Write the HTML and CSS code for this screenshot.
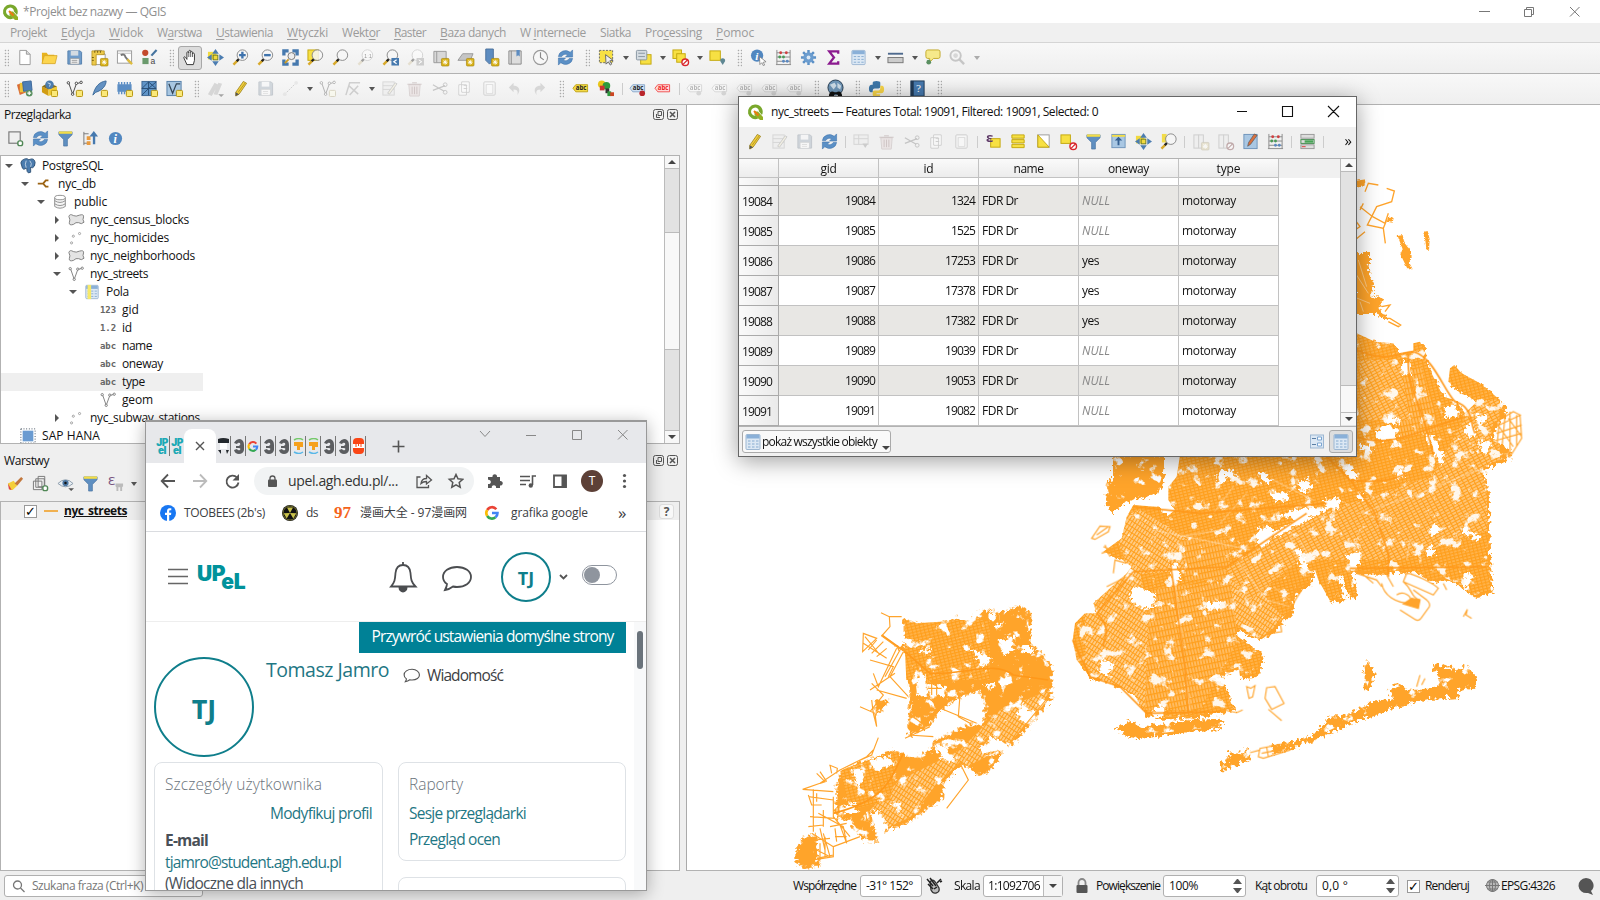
FILE: index.html
```html
<!DOCTYPE html>
<html lang="pl">
<head>
<meta charset="utf-8">
<title>*Projekt bez nazwy — QGIS</title>
<link rel="stylesheet" href="styles.css">
</head>
<body>
<div class="app">
  <header class="titlebar">
    <span class="ic" data-icon="qgis"></span><span class="apptitle" data-w="143">*Projekt bez nazwy — QGIS</span>
    <svg class="winctl" width="110" height="20" viewBox="0 0 110 20"><g fill="none" stroke="#777"><path d="M4 9.500H15M49.500 7.500h7v7h-7zM51.500 7.500v-2h7v7h-2M95 5l9.500 9.500M104.500 5L95 14.500"/></g></svg>
  </header>
  <nav class="menubar">
    <span data-w="37">Pro<u>j</u>ekt</span><span data-w="34"><u>E</u>dycja</span><span data-w="34"><u>W</u>idok</span><span data-w="45">W<u>a</u>rstwa</span><span data-w="57"><u>U</u>stawienia</span><span data-w="41"><u>W</u>tyczki</span><span data-w="38">Wekt<u>o</u>r</span><span data-w="32"><u>R</u>aster</span><span data-w="66"><u>B</u>aza danych</span><span data-w="66">W <u>i</u>nternecie</span><span data-w="31">Siatka</span><span data-w="57">Pro<u>c</u>essing</span><span data-w="38"><u>P</u>omoc</span>
  </nav>
  <div class="toolbar" data-icons="H new open save layout manage style H hand! pan zin zout zfull zsel zlay z11- zlast znext- newmap new3d bookm book clock refresh H select V layers V desel V selloc H info abacus gear sigma table V measure V tip zq- v"></div>
  <div class="toolbar second" data-icons="H vlay geo newv feather chip mesh vbox H pens- pencil save- dots- V newv- node- V editf- trash- cut- copy- paste- undo- redo- H abc balloons S abcpin abcred S abcg- abcg- abcg- abcg- abcg- H globe H python H help H"></div>

  <div class="work">
    <aside class="left">
      <div class="ptitle"><span data-w="67">Przeglądarka</span><svg class="pbtn" width="26" height="12" viewBox="0 0 26 12"><g fill="none" stroke="#555"><rect x=".5" y=".5" width="10" height="10" rx="2"/><path d="M3.500 5v3.500h3.500M5 2.500h3.500V6.500H5z"/><rect x="14.500" y=".5" width="10" height="10" rx="2"/><path d="M17 3l5 5M22 3l-5 5" stroke-width="1.500"/></g></svg></div>
      <div class="ptools" data-icons="addl refresh filter collapse infob"></div>
      <div class="treebox"><div class="tree" id="tree"></div><div class="sbar"><i class="up"></i><b class="thumb1"></b><i class="dn"></i></div></div>
      <div class="ptitle lay"><span data-w="45">Warstwy</span><svg class="pbtn" width="26" height="12" viewBox="0 0 26 12"><g fill="none" stroke="#555"><rect x=".5" y=".5" width="10" height="10" rx="2"/><path d="M3.500 5v3.500h3.500M5 2.500h3.500V6.500H5z"/><rect x="14.500" y=".5" width="10" height="10" rx="2"/><path d="M17 3l5 5M22 3l-5 5" stroke-width="1.500"/></g></svg></div>
      <div class="ptools lt" data-icons="brush group eye filter eps V"></div>
      <div class="layers"><div class="lrow"><span class="chk">✓</span><i class="sym"></i><b data-w="63">nyc_streets</b><span class="q">?</span></div></div>
    </aside>
    <main class="map">
      <svg width="914" height="766" viewBox="686 105 914 766">
        <defs>
          <pattern id="p0" width="4" height="3" patternUnits="userSpaceOnUse" patternTransform="rotate(-14)"><rect width="4" height="3" fill="#ffb44e"/><path d="M0 .5H4M.5 0V3" stroke="#ff9f1c" stroke-width="1.300"/></pattern>
          <pattern id="pa" width="3" height="5" patternUnits="userSpaceOnUse" patternTransform="rotate(33)"><rect width="3" height="5" fill="#ffcd88"/><path d="M0 .5H3M.5 0V5" stroke="#ff9f1c" stroke-width="1.200"/></pattern>
          <pattern id="pb" width="3" height="6" patternUnits="userSpaceOnUse" patternTransform="rotate(-12)"><rect width="3" height="6" fill="#ffbd64"/><path d="M0 .5H3M.5 0V6" stroke="#ff9f1c" stroke-width="1.300"/></pattern>
          <pattern id="pc" width="5" height="3" patternUnits="userSpaceOnUse" patternTransform="rotate(-28)"><rect width="5" height="3" fill="#ffc474"/><path d="M0 .5H5M.5 0V3" stroke="#ff9f1c" stroke-width="1.200"/></pattern>
          <filter id="rough" x="-5%" y="-5%" width="110%" height="110%"><feTurbulence type="turbulence" baseFrequency=".16" numOctaves="2" seed="4"/><feDisplacementMap in="SourceGraphic" scale="9" xChannelSelector="R" yChannelSelector="G"/></filter>
          <filter id="specks" x="0" y="0" width="100%" height="100%"><feTurbulence type="fractalNoise" baseFrequency=".08" numOctaves="5" seed="11"/><feColorMatrix values="0 0 0 0 1  0 0 0 0 1  0 0 0 0 1  9 0 0 0 -5.500" result="n"/><feComposite in="n" in2="SourceAlpha" operator="in"/></filter>
          <path id="queens" d="M360 465L700 200 890 100 945 125 1000 130 1015 160 1060 152 1060 130 1080 125 1097 160 1088 170 1110 210 1150 290 1185 300 1215 340 1250 305 1190 265 1165 245 1170 205 1183 195 1205 220 1260 250 1332 310 1325 325 1340 340 1300 370 1290 420 1345 440 1345 470 1270 500 1268 530 1280 565 1285 800 1292 870 1245 885 1205 865 1190 850 1150 832 1115 840 1060 810 960 815 870 812 888 885 810 902 775 840 762 800 745 850 700 880 690 930 640 985 598 1018 530 985 528 1005 605 1065 595 1100 590 1125 540 1128 535 1100 480 1120 500 1180 520 1225 470 1235 380 1250 290 1250 260 1245 220 1180 130 1140 90 1130 50 1080 38 1020 45 970 75 940 110 940 100 910 200 820 215 800 175 770 130 755 185 715 200 650 220 615 290 620 320 650 345 630 325 600 325 560 350 530Z"/>
          <path id="shore" d="M150 460H312V500L300 550 285 578 210 592 175 610 150 632 128 605 135 540 150 535ZM160 1275L200 1258 240 1275 350 1255 480 1250 478 1280 380 1290 230 1308 190 1300ZM740 1310L800 1245 855 1240 940 1195 990 1190 980 1160 1010 1150 1035 1160 1100 1160 1130 1145 1115 1085 1150 1095 1190 1105 1215 1085 1245 1135 1245 1155 1185 1165 1190 1185 1090 1192 980 1222 870 1262 745 1320ZM625 1330L690 1320 735 1295 745 1310 690 1340 630 1355ZM470 1405L475 1385 500 1375 500 1355 540 1350 555 1335 567 1370 530 1385 490 1405ZM905 1160V1110L915 1070 938 1110 920 1165Z"/>
          <path id="staten" d="M365 108L410 130 480 125 520 108 560 122 610 85 670 90 705 68 745 90 745 185 800 235 810 260 810 350 690 490 630 465 590 500 610 520 660 510 640 550 595 580 540 545 485 600 480 650 385 715 305 750 290 700 262 690 285 780 240 775 200 715 160 710 160 630 170 580 230 545 320 505 390 525 440 510 455 475 560 430 600 430 608 380 590 325 540 340 490 370 460 420 385 465 375 440 385 360 380 350 378 280 375 215 335 195 365 190Z"/>
        </defs>
        <g filter="url(#rough)">
          <g transform="translate(1060 300) scale(.33333)" fill="#ffa42c"><use href="#queens"/><use href="#shore"/></g>
          <g transform="translate(780 580) scale(.33333)" fill="#ffa42c"><use href="#staten"/><path d="M40 800L60 770 100 755 110 850 65 857 40 835ZM275 355L320 350 300 380 280 400Z"/></g>
          <path d="M1353 251L1367 251 1367 260 1366 267 1371 283 1370 297 1375 292 1380 296 1377 307 1385 318 1375 312 1353 312Z" fill="#ffa42c"/>
        </g>
        <g clip-path="url(#cq)">
          <clipPath id="cq"><use href="#queens" transform="translate(1060 300) scale(.33333)"/></clipPath>
          <path fill="url(#p0)" d="M1060 330H1500V720H1060Z"/>
          <path fill="url(#pa)" d="M1085 580L1140 570 1160 700 1140 712 1100 680 1085 665ZM1110 520L1140 510 1200 545 1190 570 1130 575ZM1225 570L1260 590 1285 620 1260 638 1236 625Z"/>
          <path fill="url(#pb)" d="M1150 590L1230 580 1238 640 1200 710 1145 710ZM1180 540H1230V580H1185ZM1380 385L1420 365 1440 430 1400 440Z"/>
          <path fill="url(#pc)" d="M1225 570L1300 520 1420 480 1488 460V530L1400 560 1300 560 1250 600ZM1360 360L1400 360 1410 420 1360 420ZM1475 400L1500 400 1500 460 1430 480Z"/>
        </g>
        <g clip-path="url(#cs)"><clipPath id="cs"><use href="#staten" transform="translate(780 580) scale(.33333)"/></clipPath><path fill="url(#pa)" d="M1000 710L1050 690 1020 740 940 780 900 830 860 820 900 780 960 750Z"/><path fill="url(#p0)" d="M905 620H990V680H905ZM840 770L900 750 890 800 850 810Z"/></g>
        <g fill="#fff" filter="url(#specks)">
          <g transform="translate(1060 300) scale(.33333)"><use href="#queens" opacity=".9"/><use href="#shore"/></g>
          <use href="#staten" transform="translate(780 580) scale(.33333)"/>
        </g>
        <g filter="url(#rough)"><g transform="translate(1060 300) scale(.33333)">
          <path fill="#fff" d="M200 880L220 852 275 870 280 910 250 922 210 905ZM120 1070L155 1090 135 1120 108 1110ZM435 903H471V920H435ZM590 680L620 668 640 690 600 735 578 705ZM650 640L700 620 760 620 830 600 835 612 760 635 720 660 640 705 635 690 700 650ZM780 595L830 588 835 605 795 615ZM625 570L670 568 685 592 640 600ZM710 540L735 530 755 555 720 575ZM847 490L865 488 885 520 875 540 855 520ZM855 755L893 745 890 795 870 802 855 770ZM935 390L975 370 1010 385 1005 420 950 415ZM975 347H1010V362H975ZM1020 175L1040 190 1045 220 1022 215ZM1195 690L1205 680 1257 700 1250 716ZM1095 685L1110 668 1137 680 1110 705ZM1085 745L1105 730 1125 755 1095 765ZM1205 380L1225 360 1245 385 1220 415ZM1255 415L1283 415 1280 455 1255 450ZM1095 400L1112 395 1150 470 1140 485 1120 460ZM1240 340L1273 335 1270 365 1240 365ZM1145 315L1175 310 1195 340 1150 345ZM465 515L510 500 525 520 470 545ZM590 510L612 510 630 540 605 545ZM700 740L714 738 740 800 722 805ZM320 790L342 780 357 830 330 845ZM890 425L930 430 925 450 895 440ZM275 1220L305 1205 308 1240 275 1245ZM450 1115L510 1140 505 1160 460 1130ZM1215 805L1232 820 1212 865 1200 855ZM1000 510L1020 498 1028 515 1005 528ZM885 570L905 575 914 595 895 592ZM832 822L842 820 860 895 848 897ZM970 825L1010 820 1010 900 975 870Z"/>
        </g>
        <path transform="translate(780 580) scale(.33333)" fill="#fff" d="M720 368L765 398 743 428 698 395ZM650 185L680 160 698 165 692 205 660 215ZM560 190L630 235 600 255ZM625 90H645V112H625ZM635 130L665 120 650 140ZM400 290L428 275 435 340 405 345ZM440 310L490 315 482 345 445 335ZM540 340L590 335 610 385 588 435 545 400ZM470 385L530 370 535 410 480 450 445 430ZM600 500L630 465 690 495 640 490 605 520ZM450 485L490 495 518 530 490 540ZM265 530L320 525 333 545 275 570ZM212 560H243V605L220 615ZM185 670L218 665 228 690 185 698ZM415 205L450 198 430 218ZM605 310L645 303 620 325ZM268 690L290 690 322 735 290 750ZM325 665L358 658 350 690ZM720 195H750V210H720Z"/></g>
        <g transform="translate(1060 300) scale(.33333)">
          <g fill="none" stroke="#fff" stroke-width="3" opacity=".45"><path d="M280 690L575 750M360 710L510 685M340 800L390 1230M530 780L620 900 690 920M640 540L760 600M520 560L460 640M560 580L480 670M640 860L690 900M900 640L1080 580 1250 510M690 710L740 830M720 720L760 790M1050 720L1040 780"/></g>
          <g fill="none" stroke="#ff981a" stroke-width="5"><path d="M890 150C980 190 1010 160 1060 155 1120 170 1150 270 1185 305 1240 320 1230 370 1245 400M1045 170C1040 260 1080 310 1100 390L1120 460M870 540C950 550 1000 540 1040 520M890 410C960 435 1010 420 1110 385L1210 350M760 430L870 540 940 630 985 760V830M870 805L1280 800M220 815L110 940C160 990 130 1010 130 1040M220 620L420 640 800 610M330 780L375 1100 385 1240M220 815L500 800 740 640M38 1020L90 1130 180 1160 260 1240 480 1235"/></g>
          <g fill="none" stroke="#ffa42c" stroke-width="3.500"><path d="M95 715L120 678 150 680 145 695 105 718ZM110 705L145 680M620 1163L645 1160 672 1210 635 1228 615 1195ZM625 1228L665 1262M560 1160L572 1165 585 1157 578 1190 567 1195ZM595 1370L600 1345 680 1330 690 1350 610 1375ZM605 1360L680 1345M620 1342L625 1370M570 1358L600 1350M965 850C970 880 1000 915 1070 910M1010 885C1030 870 1060 890 1050 905M1020 930L1065 958Q1075 965 1083 955L1108 920Q1112 910 1100 900L1060 870M1040 820C1060 820 1120 850 1135 865L1120 885 1030 845ZM1030 845C1060 870 1050 890 1080 900M1210 950L1222 928 1218 945 1235 955M470 1225L530 1238 548 1230M1300 370L1360 335 1380 345 1385 415 1350 470 1330 440M1320 340L1310 450M1335 350L1325 450M1295 385L1383 345M1310 400L1385 375M1295 425L1385 400M1350 335V470M1370 345V440M1345 355L1385 410M1310 370L1360 440M130 740L205 770M160 820L165 780 200 790M125 760L190 735M135 735L150 770M630 1000L660 965 665 995ZM1070 1160L1080 1125M1085 1155L1095 1135M890 820L950 840 965 860M980 825L1000 860M900 815L940 850M1160 870L1150 850M140 860L200 830M110 915L180 870M700 870L740 845 700 910M720 850L680 920"/><path d="M1030 912L1055 895 1080 900 1075 925Z" fill="#ffa42c"/></g>
        </g>
        <g transform="translate(780 580) scale(.33333)">
          <g fill="none" stroke="#ff981a" stroke-width="5"><path d="M375 215L450 280C560 285 640 240 700 285L805 300M370 520C330 600 320 660 160 700M375 215L305 165"/></g>
          <g fill="none" stroke="#ffa42c" stroke-width="3.500"><path d="M303 98L328 110 365 110M328 110L330 140 305 168 350 200 380 215M250 160L248 215 290 175ZM255 170L300 225M250 190L320 235M265 210L290 180M275 220L310 185M290 230L320 205M350 205L295 320 280 280M370 215L330 290 385 350M360 210L315 290M270 240L340 260 325 290M290 330L380 355M270 330L345 280M240 380L285 400 290 440 280 400 275 360M275 310L310 345 270 395M295 473L275 525 230 545M280 510L260 530 180 570 120 610 68 628 160 635M110 580L135 605 120 610M120 575L140 605M150 555L155 580M148 555L172 565 170 580M100 628V755M85 650L160 660M90 710L165 715M85 740L130 735M110 640V665M130 690V740M85 645L95 675 125 675M160 650V710L210 770M115 700L190 740 200 790M180 735L200 790M130 760L150 830 110 810M160 800V830L100 840M160 800L240 770M385 465L460 470M385 400L440 440M540 345L535 410 570 430M470 380L590 430M440 350L480 380 530 350M440 310H485M445 325H485M455 300V345M470 300V345M540 550L565 600 500 685M580 570L600 585 640 550M690 490L810 345M745 90L752 130M375 475L450 440M120 745L135 810M165 770H200M255 690L270 770M110 835L160 825M95 760L160 800M105 780L150 775M120 790V840M135 770V830M150 740L200 730M165 745L170 785"/></g>
        </g>
        <g transform="translate(1340 160) scale(.33333)">
          <g filter="url(#rough)" fill="#ffa42c"><path d="M170 225L185 222 190 245 210 270 212 290 205 305 215 325 200 325 178 280 185 265ZM250 212L260 210 266 235 264 270 256 265ZM40 60L75 55 70 75 50 80ZM140 170L158 170 155 185 138 182Z"/></g>
          <g fill="none" stroke="#ffa42c" stroke-width="4"><path d="M75 95L85 70 115 75M140 85L163 93 155 125 110 140 95 170 82 195 130 205 136 250M60 140L98 170 135 190 145 160M130 205L140 180M45 240L75 215M45 180L60 200 45 210M135 475L150 475 182 495 175 500 145 485M125 440L150 435 135 455M60 150L70 130"/></g>
          <path d="M40 330L85 400M55 300L80 380M40 410L90 430M60 425L70 455" stroke="#fff" stroke-width="2.500" fill="none" opacity=".5"/>
        </g>
      </svg>
    </main>
  </div>

  <footer class="status">
    <div class="find"><svg width="13" height="13" viewBox="0 0 13 13" fill="none" stroke="#777" stroke-width="1.300"><circle cx="5.500" cy="5" r="4"/><path d="M8.500 8l4 4"/></svg><span data-w="111">Szukana fraza (Ctrl+K)</span></div>
    <div class="stright">
      <span style="width:67px" data-w="63">Współrzędne</span><span class="box" style="width:62px"><em data-w="47">-31° 152°</em></span><span class="ic gap1" data-icon="mouse"></span><span style="width:29px" data-w="26">Skala</span><span class="box drop" style="width:80px"><em data-w="52">1:1092706</em><i class="dn"></i></span><span class="ic gap2" data-icon="lock"></span><span style="width:67px" data-w="64">Powiększenie</span><span class="box spin" style="width:83px"><em data-w="29">100%</em><s></s></span><span class="kat" data-w="52">Kąt obrotu</span><span class="box spin" style="width:83px"><em data-w="26">0,0 °</em><s></s></span><span class="chk sm">✓</span><span class="ren" data-w="44">Renderuj</span><span class="ic g3" data-icon="crs"></span><span data-w="54">EPSG:4326</span><svg class="msg" width="18" height="18" viewBox="0 0 18 18"><path d="M9 1a8 7.500 0 1 0 1 15h1l5 2-2-4a8 7.500 0 0 0-5-13z" fill="#555"/></svg>
    </div>
  </footer>
</div>

<section class="attr">
  <div class="atitle"><span class="ic" data-icon="qgis"></span><span data-w="327">nyc_streets — Features Total: 19091, Filtered: 19091, Selected: 0</span><svg width="104" height="14" viewBox="0 0 104 14"><path d="M1 6.500H11M46.500 1.500h10v10h-10zM92 1l11 11M103 1L92 12" fill="none" stroke="#111" stroke-width="1.100"/></svg></div>
  <div class="atools" data-icons="pencil editf- save- refresh S addrow- trash- cut- copy- paste- S epsel selall inv desel2 filter top pan zlay S newcol- delcol- editcol abacus S cond S"></div><span class="more">»</span>
  <div class="abody"><div class="grid" id="grid"></div><div class="sbar"><i class="up"></i><b class="thumb2"></b><i class="dn"></i></div></div>
  <div class="afoot"><span class="showall"><span class="ic" data-icon="table"></span><span data-w="115">pokaż wszystkie obiekty</span><i class="dn"></i></span><span class="fview"><span class="ic" data-icon="form"></span></span><span class="tview"><span class="ic" data-icon="table"></span></span></div>
</section>

<section class="chrome">
  <div class="tabs">
    <span class="fav up2">JP<br>el</span><span class="fav up2">JP<br>el</span><span class="tabon"><svg width="10" height="10" viewBox="0 0 10 10"><path d="M1 1l8 8M9 1L1 9" stroke="#555" stroke-width="1.400"/></svg></span>
    <span id="favs" class="favs"></span>
    <svg class="plus" width="13" height="13" viewBox="0 0 13 13"><path d="M6.500 .5v12M.5 6.500h12" stroke="#555" stroke-width="1.600"/></svg>
    <svg class="cctl" width="150" height="14" viewBox="0 0 150 14"><path d="M1 4l5 5.500L11 4M47 8.500H57M93.500 3.500h9v9h-9zM139 3l9.500 9.500M148.500 3L139 12.500" fill="none" stroke="#888"/></svg>
  </div>
  <div class="cbar">
    <svg width="90" height="18" viewBox="0 0 90 18"><g fill="none" stroke="#555" stroke-width="1.800"><path d="M15 9H2M8 2.500L1.700 9 8 15.500"/><path d="M33 9H46M40 2.500L46.300 9 40 15.500" stroke="#bbb"/><path d="M77 5.500A6 6 0 1 0 78.500 10.500"/></g><path d="M79 2v6.500h-6.500z" fill="#555"/></svg>
    <div class="omni"><svg width="10" height="13" viewBox="0 0 10 13"><rect y="4.500" width="9" height="7.500" rx="1" fill="#555"/><path d="M2 5V3.500a2.500 2.500 0 0 1 5 0V5" fill="none" stroke="#555" stroke-width="1.300"/></svg><span data-w="110">upel.agh.edu.pl/...</span>
      <svg class="share" width="48" height="16" viewBox="0 0 48 16" fill="none" stroke="#555" stroke-width="1.300"><path d="M4.500 4H1v10.500h11.500V12M5 10.500C5.500 6.500 8 5.500 10.500 5.500V2.500L15.500 7l-5 4V8.500C8 8.500 6.500 9 5 10.500z"/><path d="M40 1.500l2 4.300 4.700.5-3.500 3.200 1 4.700L40 11.800 35.800 14.200l1-4.700-3.500-3.200 4.700-.5z" stroke-width="1.500"/></svg></div>
    <svg class="ext" width="145" height="24" viewBox="0 0 145 24"><path d="M4 8h3.500a2.300 2.300 0 1 1 4.500 0h3v4a2.300 2.300 0 1 1 0 4.500V19h-4a2.200 2.200 0 1 0-4.200 0H3v-4a2.200 2.200 0 1 0 0-4.200V8z" fill="#555"/><path d="M35 7.500h10M35 11.500h10M35 15.500h6M47.500 16V7h3.500" fill="none" stroke="#555" stroke-width="1.600"/><circle cx="45.800" cy="16.500" r="2.200" fill="#555"/><path d="M69 6.500h12v11.500H69z" fill="none" stroke="#555" stroke-width="1.800"/><path d="M76.500 6h5v12.500h-5z" fill="#555"/><circle cx="107" cy="12" r="11" fill="#5d4037"/><g fill="#555"><circle cx="139.500" cy="6.500" r="1.600"/><circle cx="139.500" cy="12" r="1.600"/><circle cx="139.500" cy="17.500" r="1.600"/></g><text x="107" y="16" text-anchor="middle" fill="#fff" class="tav">T</text></svg>
  </div>
  <div class="marks">
    <svg class="m1" width="16" height="16" viewBox="0 0 16 16"><circle cx="8" cy="8" r="8" fill="#1877f2"/><path d="M7 16v-6H5V7.700h2V6.200C7 4.300 8 3.200 9.800 3.200h1.500v2H10.200c-.8 0-1 .4-1 1v1.500h2.100L11 10H9.200v6z" fill="#fff"/></svg><span class="mt1" data-w="81">TOOBEES (2b's)</span>
    <svg class="m2" width="16" height="16" viewBox="0 0 16 16"><circle cx="8" cy="8" r="8" fill="#111"/><path d="M8 8L5 2.500h6zM8 8l6.300.3-3 5.200zM8 8l-6.300.3 3 5.200z" fill="#c9c24a"/><circle cx="8" cy="8" r="7" fill="none" stroke="#8d8a3b" stroke-width=".8"/></svg><span class="mt2" data-w="12">ds</span>
    <b class="m3">97</b><span class="mt3" data-w="107">漫画大全 - 97漫画网</span>
    <span class="ic m4" data-icon="google"></span><span class="mt4" data-w="77">grafika google</span><span class="m5">»</span>
  </div>
  <div class="upel">
    <svg width="20" height="17" viewBox="0 0 20 17"><path d="M0 1.500H20M0 8.500H20M0 15.500H20" stroke="#666" stroke-width="1.400"/></svg>
    <span class="logo"><span>UP</span><span class="lo">eL</span></span>
    <svg class="bell" width="84" height="32" viewBox="0 0 84 32" fill="none" stroke="#4b4d50" stroke-width="1.800"><path d="M2 25.500C6 21 6 18 6.500 12 7 7 10 4 14 4s7 3 7.500 8c.5 6 .5 9 5 13.500z"/><path d="M14 1v3"/><path d="M10.500 27a3.500 3.500 0 0 0 7 0z" fill="#4b4d50"/><path d="M68 6c-8 0-14 4.200-14 10 0 3 1.500 5.300 4 7 0 2-1 4-2 6 3-.5 5.500-1.500 8-3.500 1.300.3 2.600.5 4 .5 8 0 14-4.200 14-10S76 6 68 6z"/></svg>
    <span class="av">TJ</span>
    <svg class="chev" width="9" height="6" viewBox="0 0 9 6"><path d="M1 1l3.500 3.500L8 1" fill="none" stroke="#555" stroke-width="1.800"/></svg>
    <span class="tog"></span>
  </div>
  <div class="content">
    <div class="reset"><span data-w="242">Przywróć ustawienia domyślne strony</span></div>
    <div class="prof"><span class="big">TJ</span><h1><span data-w="123">Tomasz Jamro</span></h1><svg width="17" height="15" viewBox="0 0 30 26" fill="none" stroke="#555" stroke-width="2"><path d="M16 2C8 2 2 6.200 2 12c0 3 1.500 5.300 4 7 0 2-1 3-2 5 3-.5 5.500-1.500 8-3.500 1.300.3 2.600.5 4 .5 8 0 13-4.200 13-9S24 2 16 2z"/></svg><span class="wi" data-w="76">Wiadomość</span></div>
    <div class="cards">
      <div class="card c1"><h2><span data-w="157">Szczegóły użytkownika</span></h2><a class="r"><span data-w="102">Modyfikuj profil</span></a><strong><span data-w="43">E-mail</span></strong><a><span data-w="176">tjamro@student.agh.edu.pl</span></a><p><span data-w="138">(Widoczne dla innych</span></p></div>
      <div class="col"><div class="card c2"><h2><span data-w="54">Raporty</span></h2><a><span data-w="117">Sesje przeglądarki</span></a><a class="l2"><span data-w="91">Przegląd ocen</span></a></div><div class="card c3"></div></div>
    </div>
    <div class="cscroll"><i></i></div>
  </div>
</section>
<script src="app.js"></script>
</body>
</html>
```
FILE: styles.css
```css
*{box-sizing:border-box}
body{margin:0;width:1600px;height:900px;overflow:hidden;position:relative;font:12px/18px "Open Sans","Noto Sans","Noto Sans CJK SC",sans-serif;color:#111;background:#efefef}
[data-w]{white-space:pre;flex:none}
.app{width:1600px;height:900px;display:flex;flex-direction:column}
.ic{display:inline-flex;width:18px;height:18px;flex:none}
.ic svg,.slot svg{display:block;overflow:visible}
.titlebar{height:23px;background:#fff;display:flex;align-items:center;padding-left:1px;color:#8f8f8f}
.apptitle{margin-left:4px}
.winctl{margin-left:auto;margin-right:15px}
.menubar{height:20px;display:flex;align-items:center;gap:14px;padding-left:10px;color:#9b9b9b;border-bottom:1px solid #d5d5d5;background:#f0f0f0}
.menubar u{text-underline-offset:2px;text-decoration-thickness:1px}
.toolbar{height:31px;display:flex;align-items:center;padding-bottom:1px;background:linear-gradient(#f8f8f8,#efefef);border-bottom:1px solid #b2b2b2}
.slot{width:25px;height:24px;display:flex;align-items:center;justify-content:center;flex:none}
.toolbar .slot{margin-left:-.5px;margin-right:.5px}
.toolbar .slot.on{background:#dcdcdc;border:1px solid #a8a8a8;border-radius:3px;width:24px;margin-right:1.500px}
.slot.off{opacity:.42;filter:grayscale(.75) brightness(1.15)}
.dd{width:12px;flex:none;display:flex;justify-content:center}
.dd::before{content:"";border:3.500px solid transparent;border-top:4px solid #555;border-bottom:0}
.dd.dim{opacity:.45}
.handle{width:16px;height:18px;flex:none;display:flex;justify-content:center;padding-left:1px}
.handle::before{content:"";width:5px;background:radial-gradient(circle,#aaa 35%,transparent 50%) 0 0/3px 3px}
.toolbar .handle:first-child{width:12.500px}
.sepr{width:7px;height:12px;flex:none;display:flex;justify-content:center}
.sepr::before{content:"";width:1px;background:#ccc}
.work{flex:none;height:766px;display:flex}
.left{width:680px;display:flex;flex-direction:column;margin-right:6px;flex:none}
.ptitle{height:20px;padding:0 1px 0 4px;display:flex;align-items:center;justify-content:space-between}
.ptools{height:30px;display:flex;align-items:center;padding:0 0 3px 3px}
.ptitle.lay{height:31px;padding-top:2px}
.ptools.lt{height:26px;padding-bottom:9px}
.treebox{height:289px;border:1px solid #b2b2b2;background:#fff;display:flex;overflow:hidden}
.tree{flex:1;padding-top:1px}
.trow{height:18px;display:flex;align-items:center;width:202px;white-space:nowrap}
.trow.sel{background:#efefef}
.tw{width:10px;display:flex;justify-content:center;flex:none}
.tw.o::before{content:"";border:4px solid transparent;border-top:4.500px solid #555;border-bottom:0}
.tw.c::before{content:"";border:4px solid transparent;border-left:4.500px solid #555;border-right:0}
.trow .ic{margin:0 6px 0 6px;width:16px;justify-content:center;align-items:center}
.ft{font:bold 9px "DejaVu Sans Mono",monospace;color:#666}
.sbar{width:15px;background:#e2e2e2;display:flex;flex-direction:column;border-left:1px solid #bbb;flex:none}
.up,.dn{height:13px;display:flex;justify-content:center;align-items:center;background:#f7f7f7;flex:none}
.up::before{content:"";border:4px solid transparent;border-bottom:4.500px solid #444;border-top:0}
.dn::before{content:"";border:4px solid transparent;border-top:4.500px solid #444;border-bottom:0}
.sbar .up{border-bottom:1px solid #bbb}
.sbar .dn{margin-top:auto;border-top:1px solid #bbb}
.thumb1{margin-top:63px;height:118px;background:#f8f8f8;border:solid #bbb;border-width:1px 0}
.layers{flex:1;border:1px solid #b2b2b2;background:#fff}
.lrow{height:18px;background:#efefef;display:flex;align-items:center;padding-left:23px}
.chk{width:13px;height:13px;border:1px solid #999;background:#fff;font:bold 13px/11px "DejaVu Sans",sans-serif;text-align:center;flex:none;color:#000}
.sym{width:14px;height:2px;background:#f0b050;margin:0 6px 0 7px}
.lrow b{text-decoration:underline}
.q{margin-left:auto;width:15px;height:15px;margin-right:5px;border:1px solid #ddd;background:#f8f8f8;border-radius:3px;text-align:center;font:bold 12px/13px "Open Sans",sans-serif;color:#555}
.map{width:914px;background:#fff;border-left:1px solid #aaa;border-bottom:1px solid #b2b2b2;overflow:hidden;flex:none}
.map svg{display:block;margin-left:-1px}
.status{height:29px;display:flex;align-items:center;padding:1px 0 0 4px}
.find{width:199px;height:22px;background:#fff;border:1px solid #b0b0b0;border-radius:3px;display:flex;align-items:center;padding-left:7px;gap:7px;color:#777}
.stright{margin-left:590px;display:flex;align-items:center}
.box{height:22px;border:1px solid #b0b0b0;border-radius:3px;background:#fff;display:flex;align-items:center;padding-left:5px;flex:none}
.box em{font-style:normal}
.drop{padding-left:4px}
.drop .dn{margin-left:auto;width:19px;height:20px;border-left:1px solid #bbb;background:#f5f5f5}
.spin s{margin-left:auto;margin-right:3px;width:9px;height:14px;display:flex;flex-direction:column;justify-content:space-between}
.spin s::before{content:"";border:4px solid transparent;border-bottom:5px solid #555;border-top:0}
.spin s::after{content:"";border:4px solid transparent;border-top:5px solid #555;border-bottom:0}
.gap1{margin:0 11px 0 3px}.gap2{margin:0 5px 0 10px}.kat{margin:0 9px}
.sm{margin:0 5px 0 8px}.g3{margin:0 -1px 0 15px}.msg{margin-left:22px}
.attr{position:absolute;left:738px;top:96px;width:619px;height:361px;background:#f0f0f0;border:1px solid #666;box-shadow:0 4px 22px rgba(0,0,0,.38);display:flex;flex-direction:column}
.atitle{height:30px;background:#fff;display:flex;align-items:center;padding-left:7px;flex:none}
.atitle>[data-w]{margin-left:7px}
.atitle>svg{margin-left:auto;margin-right:16px}
.atools{height:31px;display:flex;align-items:center;padding:0 0 2px 3px;flex:none}
.more{position:absolute;right:4px;top:34px;font-size:15px}
.abody{height:269px;display:flex;background:#fff;border:solid #b2b2b2;border-width:1px 0;overflow:hidden}
.grid{width:601px;display:grid;grid-template-columns:40px repeat(5,100px);grid-template-rows:19px 8px repeat(8,30px);flex:none;background:linear-gradient(#f0f0f0 19px,#fff 0)}
.grid>*{border-right:1px solid #c2c2c2;border-bottom:1px solid #c2c2c2;padding:0 3px;display:flex;align-items:center;overflow:hidden}
.grid .h{justify-content:center;background:linear-gradient(#fafafa,#ececec);padding-top:2px}
.grid .rh{background:linear-gradient(90deg,#fafafa,#eaeaea);padding:2px 0 0 3px;border-color:#aaa}
.grid .n{justify-content:flex-end}
.grid .alt{background:#e8e7e4}
.nul{font-style:italic;color:#888}
.abody .sbar{width:16px}
.abody .dn{margin-bottom:1px}
.thumb2{margin-top:213px;height:28px;background:#f8f8f8;border-top:1px solid #bbb}
.afoot{flex:1;display:flex;align-items:center;padding:0 3px}
.showall{width:149px;height:23px;border:1px solid #aaa;border-radius:3px;background:#f9f9f9;display:flex;align-items:center;padding-left:1px}
.showall .dn{height:8px;background:none;align-self:flex-end;margin-left:5px}
.fview{margin-left:auto;width:24px;display:flex;justify-content:center;margin-right:0}
.tview{width:24px;height:23px;border:1px solid #aaa;border-radius:3px;background:#dedede;display:flex;align-items:center;justify-content:center}
.chrome{position:absolute;left:145px;top:420px;width:502px;height:471px;border:1px solid #999;border-top:2px solid #999;background:#fff;box-shadow:0 3px 16px rgba(0,0,0,.3);display:flex;flex-direction:column;overflow:hidden;color:#3c4043}
.tabs{height:41px;background:#e7e8eb;display:flex;align-items:flex-end;flex:none;padding-left:9px}
.fav{width:15px;height:20px;margin-bottom:7px;border-right:1px solid #777;font:900 10px/8px Inter,"Open Sans",sans-serif;text-align:center;padding-top:2px;flex:none;letter-spacing:-.5px}
.up2{color:#1ba9b5}.up2+.up2{border:0;width:14px}
.tabon{width:32px;height:34px;background:#fff;border-radius:8px 8px 0 0;display:flex;align-items:center;justify-content:center}
.favs{display:flex;width:151px}
.favs .fav{display:flex;justify-content:center;align-items:center;padding:0}
.plus{margin:0 0 10px 25px}
.cctl{margin-left:74px;margin-bottom:22px}
.cbar{height:38px;display:flex;align-items:center;padding:0 0 2px 14px;flex:none}
.omni{width:220px;height:28px;border-radius:14px;background:#f1f3f4;margin-left:4px;display:flex;align-items:center;padding-left:14px;font-size:14px;color:#333;flex:none}
.omni>span{margin-left:10px}
.share{margin-left:18px}
.ext{margin-left:11px}
.tav{font:12px "Open Sans",sans-serif}
.marks{height:31px;border-bottom:1px solid #dadce0;display:flex;align-items:center;padding-left:14px;padding-bottom:7px;flex:none}
.mt1{margin-left:8px}.m2{margin-left:17px}.mt2{margin-left:8px}
.m3{margin-left:16px;color:#f5631a;font:bold 17px "Liberation Serif",serif;width:18px}
.mt3{margin-left:8px}.m4{margin-left:16px}.mt4{margin-left:10px}.m5{margin-left:30px;font-size:17px}
.upel{height:90px;border-bottom:1px solid #eee;display:flex;align-items:center;padding-left:22px;flex:none}
.logo{color:#00929b;font:900 21px/20px Inter,"Open Sans",sans-serif;display:flex;width:50px;margin-left:9px;padding-top:3px;letter-spacing:-.3px}
.lo{margin-top:8px;margin-left:-4px}
.bell{margin-left:142px}
.av,.big{border:2px solid #0f7e8b;border-radius:50%;color:#0f7e8b;font-weight:700;display:flex;align-items:center;justify-content:center;flex:none}
.av{width:50px;height:50px;font-size:18px;margin-left:28px;padding-top:2px}
.chev{margin-left:8px}
.tog{width:35px;height:20px;border:1px solid #8f959e;border-radius:10px;margin:-3px 0 0 14px;padding:1px}
.tog::before{content:"";display:block;width:16px;height:16px;border-radius:50%;background:#8f959e}
.content{flex:1;display:flex;flex-direction:column;position:relative;overflow:hidden;font-size:15.500px}
.reset{width:267px;height:31px;background:#008196;color:#fff;margin-left:213px;display:flex;align-items:center;justify-content:center;padding-bottom:3px;flex:none}
.prof{height:109px;display:flex;padding-left:8px;flex:none}
.big{width:100px;height:100px;font-size:27px;margin-top:4px;padding-top:3px}
h1{margin:5px 0 0 12px;font:400 19.500px/24px "Open Sans",sans-serif;color:#1f7784;width:123px}
.prof svg{margin:15px 0 0 14px}
.wi{margin:13px 0 0 7px}
.cards{display:flex;gap:15px;padding-left:8px;color:#495057}
.card{border:1px solid #dee2e6;border-radius:8px;padding:0 10px}
.c1{width:229px;height:190px;display:flex;flex-direction:column}
.c1 a,.c1 strong,.c1 p,.c2 a{display:block;margin:0;line-height:22px}
.card a{color:#1f7784}
h2{margin:11px 0 0;font:300 15.500px/20px "Open Sans",sans-serif;color:#6a737b}
.c1 .r{text-align:right;margin-top:8px}
.c1 strong{margin-top:5px}
.c1 p{margin-top:-1px}
.c2{width:228px;height:99px}
.c2 a{margin-top:8px}.c2 .l2{margin-top:4px}
.c3{height:60px;margin-top:16px}
.cscroll{position:absolute;right:0;top:0;width:12px;height:100%;background:#f8f9fa;padding:9px 3px}
.cscroll i{display:block;width:6px;height:38px;border-radius:3px;background:#6a737b}
```
FILE: app.js
```js
const badge = '<g transform="translate(10 10)"><rect width="8" height="8" rx="1" fill="#d9b31c" stroke="#a8860b" stroke-width=".7"/><path d="M4 1.500v5M1.500 4h5M2.200 2.200l3.600 3.600M5.800 2.200L2.200 5.800" stroke="#fff" stroke-width=".9"/></g>';
const plainBadge = '<rect x="11" y="11" width="6.500" height="6.500" rx="1" fill="#fbe97a" stroke="#b59308"/>';
const lens = (inner, x = 11) => `<path d="M1.500 16.500L6 12" stroke="#d8a92b" stroke-width="2.600"/><path d="M5 13L7.500 10.500" stroke="#222" stroke-width="2.400"/><circle cx="${x}" cy="6.500" r="5.600" fill="#f6f6f6" fill-opacity=".85" stroke="#888" stroke-width="1"/>${inner}`;
const sheet = '<path d="M4 1.500h7l4 4V16.500H4z" fill="#fff" stroke="#999"/><path d="M11 1.500v4h4" fill="#ddd" stroke="#999"/>';
const tag = (fill, stroke, text) => `<path d="M4 5h12.500v7.500H4L1 8.700z" fill="${fill}" stroke="${stroke}"/><text x="4" y="11" font-family="Open Sans" font-weight="bold" font-size="6.500" fill="${text}">abc</text>`;
const tableIcon = '<rect x="2" y="1.500" width="14" height="15" rx="1" fill="#dce8f4" stroke="#9db7d2"/><path d="M2.500 2h13v3.500h-13z" fill="#8ab0d8"/><path d="M4 8h2.500M4 11h2.500M4 14h2.500M8 8h2.500M8 11h2.500M8 14h2.500M12 8h2.500M12 11h2.500M12 14h2.500" stroke="#86abd0"/>';
const vline = '<path d="M3 3.500L7 15 11 4 16 2.500" fill="none" stroke="#777"/><g fill="#fff" stroke="#777"><circle cx="2.500" cy="3" r="1.300"/><circle cx="7" cy="15" r="1.300"/><circle cx="11" cy="3.500" r="1.300"/><circle cx="16" cy="2.500" r="1.300"/></g>';
const ban = '<circle cx="14" cy="14" r="3.500" fill="#fff" stroke="#d8262c" stroke-width="1.500"/><path d="M11.700 16.300l4.600-4.600" stroke="#d8262c" stroke-width="1.300"/>';
const icons = {
  qgis: '<path d="M9 1.500a7.300 7.300 0 1 0 3.500 13.800L10 12.500a4 4 0 1 1 3-4l3 3.500A7.300 7.300 0 0 0 9 1.500z" fill="#79a82c"/><path d="M8.500 8.500h3.500l5 5.500v3h-3l-5.500-5z" fill="#93b023"/><path d="M8 8l4.500 4.500" stroke="#ee7913" stroke-width="2"/>',
  new: sheet,
  open: '<path d="M1 15V4h5l1.500 2H14v2" fill="#e8b31e"/><path d="M1 15.500L3.500 7H17l-2 8.500z" fill="#fcd54e" stroke="#d5a322" stroke-width=".8"/>',
  save: '<path d="M2 2h13l1.500 1.500V16H2z" fill="#6f9ccb" stroke="#557fac"/><path d="M5 2h8v5H5z" fill="#d4dbe2"/><path d="M4.500 10h9.500v6H4.500z" fill="#f4f4f4" stroke="#888" stroke-width=".6"/><path d="M6 12h6M6 14h6" stroke="#999"/>',
  layout: sheet + '<path d="M1 2h13v4H5.500v11H1z" fill="#ecc94b" stroke="#b28e19" stroke-width=".8"/><path d="M4 2v2M7 2v2M10 2v2M1 9h2M1 12h2" stroke="#705a10"/>' + badge,
  manage: '<rect x="1.500" y="2" width="15" height="13" fill="#fff" stroke="#999"/><path d="M2 4.500h14" stroke="#bbb"/><path d="M5 6.500q4-2 5 2l5 6" fill="none" stroke="#777" stroke-width="2"/><path d="M12 11l5 5" stroke="#dfbd3e" stroke-width="2.500"/>',
  style: '<circle cx="4.500" cy="4" r="3.300" fill="#c34a2c"/><path d="M16.500 1L11 7" stroke="#46749f" stroke-width="2.300"/><rect x="1.500" y="9.500" width="6.500" height="6.500" fill="#6a9a6d"/><text x="10" y="16" font-family="Liberation Sans" font-size="9" fill="#444">a</text>',
  hand: '<path d="M5 16L2 9.500c-.5-1.500 1-1.700 2-.3L5.200 11V4c0-1.500 2-1.500 2 0V2.500c0-1.500 2-1.500 2 0V3.500c0-1.300 2-1.300 2 .2v1.500c0-1.200 2-1.200 2 .3V12L12 16.500H5z" fill="#fff" stroke="#333"/><path d="M7.200 4v4.500M9.200 3v5.500M11.200 5v3.500" stroke="#333" stroke-width=".8"/>',
  pan: '<rect x="1" y="3" width="9" height="8" fill="#f2da3e"/><path d="M9 0l3.500 5h-7zM9 18l3.500-5h-7zM0 9l5-3.500v7zM18 9l-5-3.500v7z" fill="#4c7db1"/><rect x="6.500" y="6.500" width="5" height="5" fill="#f2da3e" stroke="#6d7a22"/>',
  zin: lens('<path d="M11 3v7M7.500 6.500h7" stroke="#3f73ac" stroke-width="2.500"/>'),
  zout: lens('<path d="M7.500 6.500h7" stroke="#3f73ac" stroke-width="2.500"/>'),
  zfull: '<path d="M2 7V2h5M11 2h5v5M16 11v5h-5M7 16H2v-5" fill="none" stroke="#4679ae" stroke-width="3.500"/><circle cx="10" cy="7.500" r="3.700" fill="#eee" stroke="#777"/><path d="M7 11l-4 4" stroke="#c89a25" stroke-width="2"/>',
  zsel: '<rect x="1" y="1" width="11" height="11" fill="#f7e043" stroke="#c3a70d"/>' + lens(''),
  zlay: '<rect x="2" y="1" width="5" height="9" fill="#f2dc4a"/>' + lens('', 11.5), zlens: lens(''), z11: lens('<text x="7.500" y="9" font-family="Liberation Sans" font-size="6">1:1</text>'),
  zlast: lens('') + '<rect x="10" y="9.500" width="8" height="8" fill="#4679ae"/><path d="M15.500 11.500L12.500 13.500l3 2" fill="none" stroke="#fff" stroke-width="1.300"/>',
  znext: lens('') + '<rect x="10" y="9.500" width="8" height="8" fill="#888"/><path d="M12.500 11.500l3 2-3 2" fill="none" stroke="#fff"/>',
  newmap: '<path d="M2 2.500h13v12H2z" fill="#d8d8d8" stroke="#999"/><path d="M5 2.500v12" stroke="#999"/>' + badge,
  new3d: '<path d="M1 12l5-7h11l-3 7z" fill="#c5c5c5" stroke="#999"/>' + badge,
  bookm: '<path d="M4 0h8v12l-4 4-4-4z" fill="#5d8cc0" stroke="#4a719b"/>' + badge,
  book: '<path d="M2 2h13v14H2z" fill="#ddd" stroke="#888"/><path d="M4.500 2v14" stroke="#888"/><path d="M10 1h3.500v7l-1.700-1.500L10 8z" fill="#5d8cc0"/>',
  clock: '<circle cx="9" cy="9" r="7.500" fill="#f7f7f7" stroke="#999" stroke-width="1.200"/><path d="M9 3.500V9l3.500 2.500" fill="none" stroke="#888" stroke-width="1.200"/>',
  refresh: '<path d="M1.500 8A7.500 7 0 0 1 14 3.500L16.500 1v7.500H9L11.300 6A4.500 4 0 0 0 5 8z" fill="#5b90c6" stroke="#3f73ac" stroke-width=".6"/><path d="M16.500 10A7.500 7 0 0 1 4 14.500L1.500 17V9.500H9L6.700 12A4.500 4 0 0 0 13 10z" fill="#5b90c6" stroke="#3f73ac" stroke-width=".6"/>',
  select: '<rect x="1.500" y="1.500" width="14" height="13" fill="#f7e043" stroke="#666" stroke-dasharray="2 1.500"/><path d="M8 6l8 6-3.500.5 2 3.500-1.500 1-2-3.500L8.500 16z" fill="#eee" stroke="#666"/>',
  layers: '<rect x="6" y="6" width="11" height="10" fill="#f7e043" stroke="#c3a70d"/><rect x="1.500" y="1.500" width="11" height="10" rx="1" fill="#d5dce2" stroke="#8795a0"/><path d="M3.500 4.500h7M3.500 8h7" stroke="#8795a0"/>',
  desel: '<rect x="1" y="1" width="9" height="9" fill="#f7e043" stroke="#c3a70d"/><rect x="5" y="5" width="9" height="9" fill="#f7e043" stroke="#c3a70d"/>' + ban,
  desel2: '<rect x="1" y="2" width="10" height="9" fill="#f7e043" stroke="#c3a70d"/>' + ban,
  selloc: '<rect x="1" y="2" width="11" height="10" fill="#f7e043" stroke="#c3a70d"/><path d="M14.500 17l-2.500-4a2.600 2.600 0 1 1 5 0z" fill="#5f8793"/>',
  info: '<circle cx="7.500" cy="7" r="6.500" fill="#5187c0"/><text x="5.500" y="11.500" font-family="Liberation Serif" font-style="italic" font-weight="bold" font-size="12" fill="#fff">i</text><path d="M10 8l7 5.500-3 .5 1.500 3-1.500.5-1.500-3-2 2z" fill="#fff" stroke="#777" stroke-width=".8"/>',
  infob: '<circle cx="9" cy="9" r="7" fill="#5187c0"/><text x="7" y="13.500" font-family="Liberation Serif" font-style="italic" font-weight="bold" font-size="13" fill="#fff">i</text>',
  abacus: '<path d="M2 1v15M16 1v15M1 16.500h16M2 4h14M2 8.500h14M2 13h14" stroke="#888" fill="none"/><g fill="#d04040"><circle cx="6" cy="4" r="1.500"/><circle cx="12" cy="4" r="1.500"/></g><g fill="#4a9a56"><circle cx="5" cy="8.500" r="1.500"/><circle cx="9" cy="8.500" r="1.500"/></g><g fill="#5b88c0"><circle cx="9" cy="13" r="1.500"/><circle cx="13" cy="13" r="1.500"/></g>',
  gear: '<path d="M9 1v16M1 9h16M3.300 3.300l11.400 11.400M14.700 3.300L3.300 14.700" stroke="#5b90c6" stroke-width="2.600"/><circle cx="9" cy="9" r="5.500" fill="#6c9dcf"/><circle cx="9" cy="9" r="2" fill="#dce8f4"/>',
  sigma: '<path d="M14 5V2.500H4.500L9.500 9l-5 6.500H14V13" fill="none" stroke="#8b1a8f" stroke-width="2.400"/>',
  table: tableIcon,
  measure: '<path d="M1 5h16" stroke="#4e6a8e" stroke-width="2"/><rect x="1" y="9" width="16" height="5.500" fill="#ccc" stroke="#777"/>',
  tip: '<path d="M4 1h11q2 0 2 2v5q0 2-2 2h-5l-4 4v-4H4q-2 0-2-2V3q0-2 2-2z" fill="#f6e98a" stroke="#c2a92b"/><circle cx="5" cy="14" r="2.500" fill="#5a8f61"/>',
  zq: '<circle cx="7" cy="7" r="5.500" fill="none" stroke="#777" stroke-width="2"/><path d="M11 11l5 5" stroke="#777" stroke-width="2.500"/><circle cx="7" cy="7" r="2.500" fill="#999"/>',
  vlay: '<path d="M1 5l6-2 4 10-7 3z" fill="#d96b35"/><path d="M4 3h7v10H4z" fill="#eec339"/><path d="M7 2l9-1 1 10-9 1z" fill="#4e7fb6" stroke="#3a6699"/><circle cx="14" cy="14" r="3.500" fill="#5a9060"/><path d="M14 12v4M12 14h4" stroke="#fff" stroke-width="1.300"/>',
  geo: '<path d="M1 7l7 3v7l-7-4z" fill="#d19c12"/><path d="M8 10l9-3v6l-9 4z" fill="#f4ce35"/><path d="M1 7l7-4 9 4-9 3z" fill="#8a6d15"/><circle cx="9" cy="5" r="4.500" fill="#4b7cae"/><path d="M7 3l3 1-1 3" fill="none" stroke="#cfe0ee"/>' + plainBadge,
  newv: vline.replace(/#777/g, '#444') + plainBadge,
  feather: '<path d="M2 16C4 8 8 2 16 1c0 5-4 10-11 12z" fill="#6391c2" stroke="#3e6b9a"/>' + plainBadge,
  chip: '<path d="M1.500 4.500h15v8h-15z" fill="#5b8dc4"/><path d="M3 2v3M6 2v3M9 2v3M12 2v3M15 2v3M3 12v3M6 12v3M9 12v3" stroke="#5b8dc4" stroke-width="1.500"/>' + plainBadge,
  mesh: '<rect x="1" y="1.500" width="15" height="15" fill="#5f94c8" stroke="#3c6692"/><path d="M1 9h15M8 2v14M1 9l7-7 8 7M8 9l8-7M1 16l7-7" stroke="#274d75" fill="none"/>' + plainBadge,
  vbox: '<rect x="1" y="1.500" width="15" height="15" fill="#a8c6e1" stroke="#557fa9"/><path d="M3 4l4 10 4-10h4" fill="none" stroke="#345" stroke-width="1.300"/>' + plainBadge,
  pens: '<path d="M1 15l7-12 4 2-7 12zM7 15l5-12 4 1-5 12z" fill="#999"/><path d="M12 15h6l-3 3z" fill="#333"/>',
  pencil: '<path d="M4 13L12 1.500l3.500 2L7.500 15 4 17z" fill="#f0ce3d" stroke="#967c16" stroke-width=".8"/><path d="M4 13l3.500 2L3.700 17z" fill="#555"/><path d="M6.500 13L14 3" stroke="#b99a21"/>',
  dots: '<path d="M3 15L15 3" stroke="#888" stroke-dasharray="2 1"/><g fill="#bbb"><circle cx="3" cy="15" r="2"/><circle cx="15" cy="3" r="2"/></g>',
  node: '<path d="M2 16L6 3h11M5 6l10 9M15 6L6 16" stroke="#888" stroke-width="1.600" fill="none"/>',
  editf: '<rect x="2" y="2" width="12" height="14" fill="#ccc" stroke="#999"/><path d="M2 6h12M2 10h12" stroke="#999"/><path d="M7 14l8-11 2 1-8 11z" fill="#e5cf68" stroke="#888"/>',
  trash: '<path d="M3 5h12l-1 12H4z" fill="#e3b1b1" stroke="#b88"/><path d="M1.500 4.500h15M6.500 3h5M6.500 7v8M9 7v8M11.500 7v8" stroke="#b66" fill="none"/>',
  cut: '<path d="M2 5l12 7M2 11l13-5" stroke="#777" stroke-width="1.300"/><circle cx="15" cy="13" r="2" fill="none" stroke="#777"/><circle cx="15" cy="5" r="2" fill="none" stroke="#777"/>',
  copy: '<path d="M3 5h8v11H3zM6 2h8v11H6z" fill="#eee" stroke="#888"/><path d="M8 6h4M8 9h4" stroke="#888"/>',
  paste: '<rect x="3" y="2" width="12" height="14" rx="1" fill="#ddd" stroke="#888"/><rect x="5.500" y="5" width="7" height="9" fill="#fff" stroke="#999"/>',
  undo: '<path d="M3 8l5-5v3c6 0 8 5 4 10 1-4 0-6-4-6v3z" fill="#999"/>',
  redo: '<path d="M15 8l-5-5v3C4 6 2 11 6 16c-1-4 0-6 4-6v3z" fill="#999"/>',
  abc: tag('#f4da45', '#c0a315', '#222'), abcred: tag('#ffdada', '#f05050', '#e22'),
  abcpin: tag('#cfe1f4', '#8aa9cb', '#222') + '<circle cx="14" cy="14" r="3" fill="#b9252b"/>',
  abcg: tag('#ddd', '#999', '#555') + '<circle cx="13.500" cy="14" r="2.500" fill="#999"/>',
  balloons: '<circle cx="5" cy="4.500" r="4" fill="#e9c71a"/><circle cx="10" cy="6" r="4" fill="#2d9a3d"/><path d="M3 6h5v5H3z" fill="#c33"/><rect x="9" y="9" width="4" height="5" fill="#333"/><rect x="11" y="12" width="4" height="5" fill="#2d9a3d"/><rect x="14" y="13" width="4" height="4" fill="#c42"/>',
  globe: '<circle cx="9" cy="8" r="8" fill="#6f96b8" stroke="#263c50"/><path d="M3 5l5-2 2 3-3 4zM11 3l4 3-1 4-3-2z" fill="#cfdee9"/><path d="M2 17c0-4 3-6 6-4h2c3-2 6 0 6 4l-4 1-1-3H8l-1 3z" fill="#111"/>',
  python: '<path d="M5 8V3q0-2 4-2t4 2v4q0 2-2 2H7q-2 0-2 2v2H3q-2 0-2-4t3-4h5" fill="#3d76a8"/><path d="M13 6h2q2 0 2 4t-3 4h-5v1h4q0 3-4 3t-4-2v-3q0-2 2-2h4q2 0 2-2z" fill="#f8d548"/>',
  help: '<rect x="2" y="1" width="14" height="16" fill="#4679ae" stroke="#213a56"/><path d="M2 1h3v16H2z" fill="#213a56"/><text x="7.500" y="13" font-family="Liberation Serif" font-size="12" fill="#fff">?</text>',
  addl: '<rect x="2" y="2" width="12" height="12" fill="none" stroke="#777" stroke-width="1.200"/><rect x="11.500" y="11.500" width="5" height="5" rx="2" fill="#fff" stroke="#4f8755" stroke-width="1.500"/>',
  filter: '<path d="M2 2h14v3l-5 5v7H7v-7L2 5z" fill="#5f8fc1" stroke="#44709f" stroke-width=".7"/><path d="M2 1.500h14V4H2z" fill="#f3dd47"/>',
  collapse: '<path d="M2 2v14M2 4h5M2 14h5" stroke="#777" fill="none"/><path d="M5 6.500h4v4H5zM5 12h4v4H5z" fill="#e99a3d"/><path d="M11.500 15V7H8l4.500-6L17 7h-3v8z" fill="#4679ae"/>',
  brush: '<path d="M1 9l6-3 4 5-5 5H3z" fill="#f5cf3a"/><path d="M1 9l4 7-3-1z" fill="#d44"/><path d="M8 9l7-7 2 2-6 7z" fill="#c2773c"/>',
  group: '<path d="M1.500 6.500h9v9h-9zM4 4h9v9H4zM6.500 1.500h7v11h-7z" fill="#f3f3f3" fill-opacity=".6" stroke="#777"/><rect x="11.500" y="11.500" width="5" height="5" rx="2" fill="#fff" stroke="#4f8755" stroke-width="1.500"/>',
  eye: '<path d="M1 9q8-8 16 0-8 7-16 0z" fill="#e8eef4" stroke="#8b9cab"/><circle cx="9" cy="8.500" r="3.300" fill="#4b76a2"/><circle cx="9" cy="8.500" r="1.300" fill="#111"/><path d="M12 14h6l-3 3z" fill="#555"/>',
  eps: '<text x="1" y="11" font-family="Open Sans" font-size="16" fill="#79567f">ε</text><path d="M9 9h8v3l-1 1v4h-2v-4h-2v4h-2v-4l-1-1z" fill="#bbb"/>',
  addrow: '<rect x="1" y="2" width="15" height="10" fill="#ccc" stroke="#999"/><path d="M1 6h15M6 2v10" stroke="#999"/><path d="M10 11h6l-3 5z" fill="#888"/>',
  epsel: '<rect x="6" y="6" width="10" height="9" fill="#f7e043" stroke="#c3a70d"/><text x="1" y="10" font-family="Open Sans" font-weight="bold" font-size="14" fill="#5f3b68">ε</text>',
  selall: '<g fill="#f7e043" stroke="#c3a70d"><path d="M2 2h13v3.500H2zM2 7h13v3.500H2zM2 12h13v3.500H2z"/></g>',
  inv: '<rect x="3" y="2" width="12" height="13" fill="#fff" stroke="#999"/><path d="M3 2l12 13H3z" fill="#f7e043" stroke="#c3a70d"/>',
  top: '<rect x="2" y="1.500" width="14" height="14" fill="#a9c7e3" stroke="#6e93ba"/><path d="M2 2h14v2H2z" fill="#f3dd47"/><path d="M9 4l4 4h-3v5H8V8H5z" fill="#345f91"/>',
  newcol: '<rect x="2" y="2" width="10" height="14" fill="#ccc" stroke="#888"/><path d="M7 2v14" stroke="#888"/>' + badge,
  delcol: '<rect x="2" y="2" width="10" height="14" fill="#ccc" stroke="#888"/><path d="M7 2v14" stroke="#888"/>' + ban,
  editcol: '<rect x="2" y="1.500" width="14" height="15" fill="#a9c7e3" stroke="#6e93ba"/><path d="M6 14l1-4 6-9 3 1.500-7 9.500z" fill="#d9703f" stroke="#555" stroke-width=".7"/>',
  cond: '<rect x="2" y="1.500" width="14" height="4" fill="#ddd" stroke="#999"/><rect x="2" y="7" width="14" height="4" fill="#ddd" stroke="#3f8b4b"/><path d="M6 9h9" stroke="#46a555" stroke-width="2.500"/><rect x="2" y="12.500" width="14" height="4" fill="#ddd" stroke="#999"/><path d="M3 14.500h4" stroke="#d33"/>',
  form: '<rect x="2.500" y="2" width="13" height="13" fill="#dce8f4" stroke="#9db7d2"/><path d="M4 5.500h4M4 11.500h4" stroke="#5b7fa5"/><path d="M9.500 4h4v3h-4zM9.500 10h4v3h-4z" fill="#fff" stroke="#7ba5d1"/>',
  pg: '<path d="M2 3q5-4 8-1 6-3 7 3 0 5-3 6-1 0-2-1v6q-3 2-4-1l-.5-4Q3 15 2 9 0 5 2 3z" fill="#4b7cae" stroke="#2e5073"/><path d="M7 3q-2 4 0 8M11 3q3 3 1 7" fill="none" stroke="#c7d8e8"/>',
  conn: '<path d="M2 8.500h6M14 5h-3L8 8.500l3 3.500h3" fill="none" stroke="#9b6313" stroke-width="2"/>',
  db: '<path d="M3 4v10q6 4 12 0V4" fill="#f5f5f5" stroke="#888"/><ellipse cx="9" cy="4" rx="6" ry="2.500" fill="#fff" stroke="#888"/><path d="M3 7.500q6 4 12 0M3 11q6 4 12 0" fill="none" stroke="#888"/>',
  poly: '<path d="M1 5Q2 1.500 6 4q3 1.500 7-.5 5-1.500 4.500 2-1.500 3 .5 6-3 3-6 .5-3-1-6 2-5 1.500-4.500-2Q3 9 1 5z" fill="#e4e4e4" stroke="#777"/>',
  pts: '<g fill="#fff" stroke="#999"><circle cx="4" cy="14.500" r="1.200"/><circle cx="6" cy="7" r="1.200"/><circle cx="13" cy="4" r="1.200"/></g>',
  line: vline,
  fields: tableIcon + '<path d="M4 1h4v16H4z" fill="#f6e96a"/>',
  hana: '<rect x="3" y="3" width="12" height="12" fill="#6a9bd1"/><rect x="1" y="1" width="16" height="16" fill="none" stroke="#234" stroke-dasharray="1 2"/>',
  mouse: '<path d="M5 5q3-4 6 1l3 5q1 4-3 5-3 1-5-3z" fill="#bbb" stroke="#333" stroke-width="1.300"/><path d="M2 2l6 7M5 1l6 8M3 7l5 5M16 2l-4 4M9 12l3-2M15 5l2-1" stroke="#222" stroke-width="1.500"/>',
  lock: '<rect x="3.500" y="8" width="11" height="8" rx="1" fill="#555"/><path d="M5.500 8V5.500a3.500 3.500 0 0 1 7 0V8" fill="none" stroke="#888" stroke-width="1.800"/>',
  crs: '<circle cx="8.500" cy="8.500" r="6" fill="#bbb"/><g fill="none" stroke="#777"><circle cx="8.500" cy="8.500" r="6"/><ellipse cx="8.500" cy="8.500" rx="3" ry="6"/><path d="M1 8.500h15M8.500 2v13M3.500 5h10M3.500 12h10"/></g>',
  google: '<g fill="none" stroke-width="2.600"><path d="M13.300 5.200A5.500 5.500 0 0 0 4.200 6" stroke="#ea4335"/><path d="M4.200 6a5.500 5.500 0 0 0 0 6" stroke="#fbbc05"/><path d="M4.200 12a5.500 5.500 0 0 0 8.300 1.300" stroke="#34a853"/><path d="M12.500 13.300A5.500 5.500 0 0 0 14.500 9H9" stroke="#4285f4"/></g>'
};
const svg = (n, s = 18) => `<svg width="${s}" height="${s}" viewBox="0 0 18 18">${icons[n]}</svg>`;

document.querySelectorAll('[data-icons]').forEach(bar => {
  const inDialog = bar.classList.contains('atools');
  bar.innerHTML = bar.dataset.icons.split(' ').map(k => {
    if (k === 'H') return '<span class="handle"></span>';
    if (k === 'S') return '<span class="sepr"></span>';
    if (k === 'V') return '<span class="dd"></span>';
    if (k === 'v') return '<span class="dd dim"></span>';
    const cls = k.endsWith('-') ? ' off' : k.endsWith('!') ? ' on' : '';
    let name = k.replace(/[-!]$/, '');
    if (name === 'zlay' && !inDialog) name = 'zlens';
    return `<span class="slot${cls}">${svg(name, 17)}</span>`;
  }).join('');
});
document.querySelectorAll('[data-icon]').forEach(e => { e.innerHTML = svg(e.dataset.icon); });

// depth, twisty (o = open, c = closed), icon or field type, label, label width
const nodes = [
  [0, 'o', 'pg', 'PostgreSQL', 61], [1, 'o', 'conn', 'nyc_db', 38], [2, 'o', 'db', 'public', 33],
  [3, 'c', 'poly', 'nyc_census_blocks', 99], [3, 'c', 'pts', 'nyc_homicides', 79], [3, 'c', 'poly', 'nyc_neighborhoods', 105],
  [3, 'o', 'line', 'nyc_streets', 58], [4, 'o', 'fields', 'Pola', 23], [5, '', '=123', 'gid', 17], [5, '', '=1.2', 'id', 10],
  [5, '', '=abc', 'name', 30], [5, '', '=abc', 'oneway', 41], [5, '', '=abc', 'type', 23], [5, '', 'line', 'geom', 31],
  [3, 'c', 'pts', 'nyc_subway_stations', 110], [0, '', 'hana', 'SAP HANA', 58]
];
document.getElementById('tree').innerHTML = nodes.map(([d, t, i, l, w]) =>
  `<div class="trow${l === 'type' ? ' sel' : ''}" style="padding-left:${3 + d * 16}px"><span class="tw ${t}"></span><span class="ic">${i[0] === '=' ? `<span class="ft">${i.slice(1)}</span>` : svg(i, 16)}</span><span data-w="${w}">${l}</span></div>`).join('');

const rows = [[19084, 1324, ''], [19085, 1525, ''], [19086, 17253, 'yes'], [19087, 17378, 'yes'], [19088, 17382, 'yes'], [19089, 19039, ''], [19090, 19053, ''], [19091, 19082, '']];
const heads = [['gid', 16], ['id', 10], ['name', 30], ['oneway', 41], ['type', 24]];
let g = '<div class="h"></div>' + heads.map(([h, w]) => `<div class="h"><span data-w="${w}">${h}</span></div>`).join('') + '<div class="rh"></div>' + '<div></div>'.repeat(5);
rows.forEach(([a, b, c], i) => {
  const k = i % 2 ? '' : ' alt';
  g += `<div class="rh"><span data-w="30">${a}</span></div><div class="n${k}"><span data-w="30">${a}</span></div><div class="n${k}"><span data-w="${b < 9999 ? 24 : 30}">${b}</span></div><div class="${k}"><span data-w="36">FDR Dr</span></div><div class="${k}">${c ? '<span data-w="17">yes</span>' : '<span class="nul" data-w="28">NULL</span>'}</div><div class="${k}"><span data-w="54">motorway</span></div>`;
});
document.getElementById('grid').innerHTML = g;

const swirl = '<svg width="11" height="15" viewBox="0 0 11 15"><path d="M1 4Q3 0 7 0q4 1 4 6v5q-1 4-5 4-4 0-5-4l3-1q1 2 3 1 1-2-1-2H3V7h3q2-1 1-3-2-1-3 1z" fill="#5b5d60"/></svg>';
const cat = '<svg width="11" height="16" viewBox="0 0 11 16"><path d="M0 1q5-2 11 0v4H0zM0 12h3v4M8 12h3l-2 4z" fill="#24292e"/><path d="M2 5h7v6H2z" fill="#fff"/></svg>';
const tt = '<svg width="11" height="16" viewBox="0 0 11 16"><path d="M1 2q5-3 9 0" stroke="#75c96b" fill="none" stroke-width="1.500"/><path d="M1 14q5 3 9 0" stroke="#58b7e8" fill="none" stroke-width="1.500"/><path d="M1 4h9v5H7v3H4V8H1z" fill="#f5a01d"/></svg>';
const red = '<svg width="11" height="16" viewBox="0 0 11 16"><rect width="11" height="16" rx="4" fill="#fa4616"/><path d="M0 6h11v4H0z" fill="#fff"/><path d="M3 5v4M5.500 5v3M8 5v4" stroke="#fa4616"/></svg>';
const goog = svg('google', 15);
document.getElementById('favs').innerHTML = [cat, swirl, goog, swirl, swirl, tt, tt, swirl, swirl, red].map(s => `<span class="fav">${s}</span>`).join('');

// adjust tracking so that each label takes its nominal width
document.querySelectorAll('[data-w]').forEach(e => {
  const r = document.createRange();
  r.selectNodeContents(e);
  const w = r.getBoundingClientRect().width;
  e.style.letterSpacing = ((+e.dataset.w - w) / e.textContent.length).toFixed(3) + 'px';
});
```
